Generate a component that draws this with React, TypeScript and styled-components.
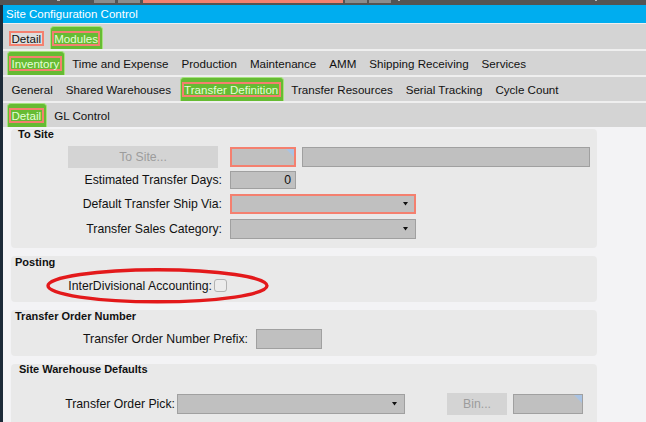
import * as React from "react";
import styled, { createGlobalStyle, css } from "styled-components";

const SALMON = "#f4806f";

const GlobalStyle = createGlobalStyle`
  html, body {
    margin: 0;
    padding: 0;
    background: #f3f3f5;
  }
  body {
    font-family: "Liberation Sans", Arial, sans-serif;
    color: #111;
  }
  #root {
    width: 646px;
    height: 422px;
    overflow: hidden;
  }
`;

const Screen = styled.div`
  display: flex;
  flex-direction: column;
  width: 646px;
  height: 422px;
  overflow: hidden;
`;

const TopStrip = styled.div`
  flex: none;
  display: flex;
  align-items: flex-start;
  height: 5px;
  background: #545454;
`;

type StripKind = "gray" | "salmon" | "tick";

const StripBlock = styled.div<{ $ml: number; $w: number; $kind: StripKind }>`
  flex: none;
  margin-left: ${p => p.$ml}px;
  width: ${p => p.$w}px;
  ${p =>
    p.$kind === "gray" &&
    css`
      height: 3px;
      background: #8c8c8c;
    `}
  ${p =>
    p.$kind === "salmon" &&
    css`
      height: 3px;
      background: ${SALMON};
    `}
  ${p =>
    p.$kind === "tick" &&
    css`
      height: 1px;
      background: #b8b8b8;
    `}
`;

const Frame = styled.div`
  flex: 1;
  display: flex;
  flex-direction: column;
  border-left: 3px solid #1c2a38;
  min-height: 0;
`;

const TitleBar = styled.div`
  flex: none;
  height: 18px;
  display: flex;
  align-items: center;
  padding-left: 3px;
  background: #00adef;
  color: #fff;
  font-size: 11.5px;
`;

const TabStack = styled.div`
  flex: none;
  display: flex;
  flex-direction: column;
  gap: 2px;
  padding-top: 1px;
  background: #efefef;
`;

const TabRow = styled.div<{ $h: number; $pt?: number }>`
  display: flex;
  align-items: stretch;
  box-sizing: border-box;
  height: ${p => p.$h}px;
  padding: ${p => p.$pt ?? 0}px 0 0 2px;
  background: #d4d4d4;
`;

const Tab = styled.div<{ $active?: boolean; $marked?: boolean }>`
  flex: none;
  display: flex;
  align-items: center;
  box-sizing: border-box;
  padding: 1px ${p => (p.$marked ? 4 : 6.5)}px 0;
  font-size: 11.6px;
  white-space: nowrap;
  color: #111;
  ${p =>
    p.$active &&
    css`
      margin: 0 1px 0 2px;
      padding: 0 2px 0 1px;
      background: #66bb33;
      border: 1px solid #a6e27f;
      border-bottom: 0;
      border-radius: 4px 4px 0 0;
      color: #e4ffd6;
    `}
`;

const Mark = styled.span<{ $fill?: boolean }>`
  display: inline-block;
  padding: 0 0.5px;
  line-height: 11px;
  border: 2px solid ${SALMON};
  background: ${p => (p.$fill ? "#dedede" : "transparent")};
`;

const Content = styled.div`
  position: relative;
  flex: 1;
  display: flex;
  flex-direction: column;
  gap: 8px;
  padding: 2px 0 0 8px;
  background: #f3f3f5;
  min-height: 0;
`;

const Panel = styled.section<{ $h: number }>`
  flex: none;
  box-sizing: border-box;
  width: 586px;
  height: ${p => p.$h}px;
  background: #e9e9e9;
  border-radius: 4px;
`;

const PanelTitle = styled.div<{ $pl: number; $pt?: number }>`
  padding: ${p => p.$pt ?? 0}px 0 0 ${p => p.$pl}px;
  font-size: 11px;
  font-weight: bold;
  line-height: 11px;
  color: #111;
`;

const FormRow = styled.div<{ $h: number; $mt?: number }>`
  display: flex;
  align-items: center;
  height: ${p => p.$h}px;
  margin-top: ${p => p.$mt ?? 0}px;
`;

const LabelCell = styled.div<{ $w: number; $gap: number }>`
  flex: none;
  display: flex;
  justify-content: flex-end;
  align-items: center;
  width: ${p => p.$w}px;
  margin-right: ${p => p.$gap}px;
  font-size: 12.25px;
  white-space: nowrap;
  color: #111;
`;

const Fields = styled.div`
  display: flex;
  align-items: center;
  gap: 6px;
`;

const TextBoxFrame = styled.div<{ $w: number; $h: number; $hot?: boolean; $ml?: number }>`
  position: relative;
  flex: none;
  box-sizing: border-box;
  width: ${p => p.$w}px;
  height: ${p => p.$h}px;
  margin-left: ${p => p.$ml ?? 0}px;
  display: flex;
  align-items: center;
  justify-content: flex-end;
  padding-right: 4px;
  background: #c0c0c0;
  border: ${p => (p.$hot ? `2px solid ${SALMON}` : "1px solid #a0a0a0")};
  font-size: 12.25px;
  color: #111;
`;

/* small blue flag in the top-right corner of lookup boxes */
const Corner = styled.svg`
  position: absolute;
  top: 0;
  right: 0;
  width: 8px;
  height: 8px;
  z-index: 1;
`;

const TextBox: React.FC<{
  w: number;
  h: number;
  hot?: boolean;
  corner?: boolean;
  ml?: number;
  children?: React.ReactNode;
}> = ({ w, h, hot, corner, ml, children }) => (
  <TextBoxFrame $w={w} $h={h} $hot={hot} $ml={ml}>
    {children}
    {corner && (
      <Corner viewBox="0 0 8 8">
        <polygon points="0,0 8,0 8,8" fill="#a9c3e3" />
      </Corner>
    )}
  </TextBoxFrame>
);

const SelectBox = styled.div<{ $w: number; $h: number; $hot?: boolean }>`
  flex: none;
  box-sizing: border-box;
  width: ${p => p.$w}px;
  height: ${p => p.$h}px;
  display: flex;
  align-items: center;
  justify-content: flex-end;
  padding-right: ${p => (p.$hot ? 6 : 7)}px;
  background: #c0c0c0;
  border: ${p => (p.$hot ? `2px solid ${SALMON}` : "1px solid #a0a0a0")};
`;

const GhostButton = styled.div<{ $w: number; $h: number; $mr?: number; $ml?: number }>`
  flex: none;
  display: flex;
  align-items: center;
  justify-content: center;
  width: ${p => p.$w}px;
  height: ${p => p.$h}px;
  margin: 0 ${p => p.$mr ?? 0}px 0 ${p => p.$ml ?? 0}px;
  background: #d4d4d4;
  color: #9c9c9c;
  font-size: 12.25px;
`;

const CheckBox = styled.div`
  flex: none;
  box-sizing: border-box;
  width: 13px;
  height: 13px;
  border: 1px solid #b2b2b2;
  border-radius: 3px;
  background: #ececec;
`;

const Annotation = styled.svg`
  position: absolute;
  left: 37px;
  top: 135px;
  width: 240px;
  height: 48px;
  pointer-events: none;
`;

const Arrow = () => (
  <svg width="5" height="4" viewBox="0 0 5 4">
    <polygon points="0,0 5,0 2.5,3.5" fill="#111" />
  </svg>
);

const Select: React.FC<{ w: number; h: number; hot?: boolean }> = ({ w, h, hot }) => (
  <SelectBox $w={w} $h={h} $hot={hot}>
    <Arrow />
  </SelectBox>
);

const strip: { ml: number; w: number; kind: StripKind }[] = [
  { ml: 57, w: 3, kind: "tick" },
  { ml: 34, w: 21, kind: "gray" },
  { ml: 3, w: 22, kind: "gray" },
  { ml: 3, w: 200, kind: "salmon" },
  { ml: 2, w: 22, kind: "gray" },
  { ml: 2, w: 22, kind: "gray" },
  { ml: 7, w: 2, kind: "tick" },
  { ml: 195, w: 2, kind: "tick" },
];

const App: React.FC = () => {
  return (
    <>
      <GlobalStyle />
      <Screen>
        <TopStrip>
          {strip.map((b, i) => (
            <StripBlock key={i} $ml={b.ml} $w={b.w} $kind={b.kind} />
          ))}
        </TopStrip>
        <Frame>
          <TitleBar>Site Configuration Control</TitleBar>
          <TabStack>
            <TabRow $h={25} $pt={2}>
              <Tab $marked>
                <Mark $fill>Detail</Mark>
              </Tab>
              <Tab $active>
                <Mark>Modules</Mark>
              </Tab>
            </TabRow>
            <TabRow $h={24}>
              <Tab $active>
                <Mark>Inventory</Mark>
              </Tab>
              <Tab>Time and Expense</Tab>
              <Tab>Production</Tab>
              <Tab>Maintenance</Tab>
              <Tab>AMM</Tab>
              <Tab>Shipping Receiving</Tab>
              <Tab>Services</Tab>
            </TabRow>
            <TabRow $h={24}>
              <Tab>General</Tab>
              <Tab>Shared Warehouses</Tab>
              <Tab $active>
                <Mark>Transfer Definition</Mark>
              </Tab>
              <Tab>Transfer Resources</Tab>
              <Tab>Serial Tracking</Tab>
              <Tab>Cycle Count</Tab>
            </TabRow>
            <TabRow $h={24}>
              <Tab $active>
                <Mark>Detail</Mark>
              </Tab>
              <Tab>GL Control</Tab>
            </TabRow>
          </TabStack>
          <Content>
            <Panel $h={119}>
              <PanelTitle $pl={7}>To Site</PanelTitle>
              <FormRow $h={23} $mt={5}>
                <LabelCell $w={211} $gap={8}>
                  <GhostButton $w={150} $h={22} $mr={4}>
                    To Site...
                  </GhostButton>
                </LabelCell>
                <Fields>
                  <TextBox w={66} h={20} hot corner />
                  <TextBox w={288} h={20} />
                </Fields>
              </FormRow>
              <FormRow $h={23}>
                <LabelCell $w={211} $gap={8}>
                  Estimated Transfer Days:
                </LabelCell>
                <TextBox w={66} h={18}>
                  0
                </TextBox>
              </FormRow>
              <FormRow $h={25}>
                <LabelCell $w={211} $gap={8}>
                  Default Transfer Ship Via:
                </LabelCell>
                <Select w={186} h={20} hot />
              </FormRow>
              <FormRow $h={25}>
                <LabelCell $w={211} $gap={8}>
                  Transfer Sales Category:
                </LabelCell>
                <Select w={186} h={20} />
              </FormRow>
            </Panel>

            <Panel $h={46}>
              <PanelTitle $pl={4} $pt={1}>
                Posting
              </PanelTitle>
              <FormRow $h={23} $mt={6}>
                <LabelCell $w={201} $gap={2}>
                  InterDivisional Accounting:
                </LabelCell>
                <CheckBox />
              </FormRow>
            </Panel>

            <Panel $h={46}>
              <PanelTitle $pl={4} $pt={1}>
                Transfer Order Number
              </PanelTitle>
              <FormRow $h={23} $mt={5}>
                <LabelCell $w={237} $gap={8}>
                  Transfer Order Number Prefix:
                </LabelCell>
                <TextBox w={66} h={20} />
              </FormRow>
            </Panel>

            <Panel $h={80}>
              <PanelTitle $pl={8}>Site Warehouse Defaults</PanelTitle>
              <FormRow $h={24} $mt={17}>
                <LabelCell $w={164} $gap={2}>
                  Transfer Order Pick:
                </LabelCell>
                <Select w={228} h={20} />
                <GhostButton $w={60} $h={22} $ml={42}>
                  Bin...
                </GhostButton>
                <TextBox w={70} h={20} ml={6} corner />
              </FormRow>
            </Panel>

            <Annotation viewBox="0 0 240 48">
              <ellipse
                cx="117.5"
                cy="23.8"
                rx="109.5"
                ry="16"
                fill="none"
                stroke="#e3191b"
                strokeWidth="3.4"
              />
            </Annotation>
          </Content>
        </Frame>
      </Screen>
    </>
  );
};

export default App;
